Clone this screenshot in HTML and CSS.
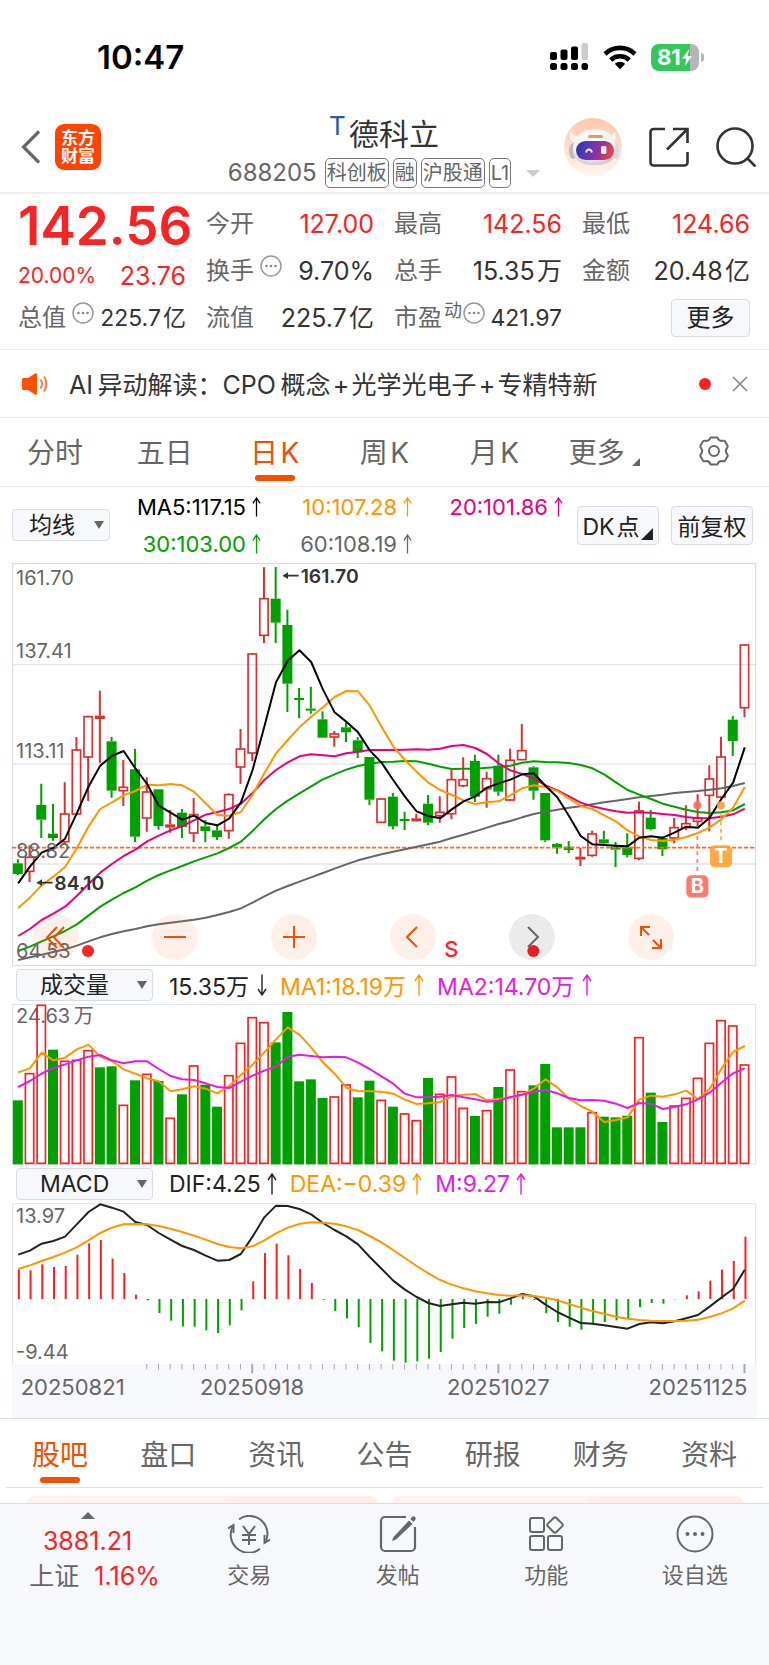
FILE: index.html
```html
<!DOCTYPE html>
<html lang="zh-CN">
<head>
<meta charset="utf-8">
<meta name="viewport" content="width=device-width, initial-scale=1">
<title>德科立 688205</title>
<link rel="stylesheet" href="styles.css">
</head>
<body>
<svg class="defs" aria-hidden="true">
  <symbol id="up" viewBox="0 0 10 22"><path d="M5 21.500V1M1 7 5 1l4 6" fill="none" stroke="currentColor" stroke-width="1.400"/></symbol>
  <symbol id="down" viewBox="0 0 10 22"><path d="M5 .5V21M1 15l4 6 4-6" fill="none" stroke="currentColor" stroke-width="1.400"/></symbol>
  <symbol id="info" viewBox="0 0 22 22"><circle cx="11" cy="11" r="10" fill="none" stroke="#999" stroke-width="1.500"/><g fill="#888"><circle cx="6.500" cy="11" r="1.300"/><circle cx="11" cy="11" r="1.300"/><circle cx="15.500" cy="11" r="1.300"/></g></symbol>
</svg>

<div class="status">
  <time>10:47</time>
  <svg class="signal" viewBox="0 0 38 28"><g><rect x="0" y="9" width="7" height="8" rx="2"/><rect x="10.500" y="6.500" width="7" height="10.500" rx="2"/><rect x="21" y="3.500" width="7" height="13.500" rx="2"/><rect x="31.500" y="0" width="6.500" height="17" rx="2" fill="#ccc"/><rect x="0" y="20" width="7" height="7" rx="2.500"/><rect x="10.500" y="20" width="7" height="7" rx="2.500"/><rect x="21" y="20" width="7" height="7" rx="2.500"/><rect x="31.500" y="20" width="6.500" height="7" rx="2.500"/></g></svg>
  <svg class="wifi" viewBox="0 0 34 25"><g fill="none" stroke="#000" stroke-width="4.600"><path d="M2 9a21.500 21.500 0 0 1 30 0"/><path d="M7.700 15a13.400 13.400 0 0 1 18.600 0"/></g><path d="M17 24.500l-5.200-5.700a7.600 7.600 0 0 1 10.400 0z"/></svg>
  <div class="battery"><span>81</span><svg viewBox="0 0 10 17"><path d="M7 0 0 9.500h4.200L3 17l7-10H5.800z" fill="#fff"/></svg></div>
</div>

<header class="header">
  <div class="header-left">
    <button class="plain" aria-label="返回"><svg width="20" height="34" viewBox="0 0 20 34"><path d="M18 1.500 2.500 17 18 32.500" fill="none" stroke="#666" stroke-width="3.200"/></svg></button>
    <a class="logo" href="#">东方<br>财富</a>
  </div>
  <div class="title">
    <h1><sup>T</sup>德科立</h1>
    <div class="codes"><span class="code">688205</span><span class="tag">科创板</span><span class="tag">融</span><span class="tag">沪股通</span><span class="tag">L1</span><i class="caret"></i></div>
  </div>
  <div class="header-right">
    <button class="plain" aria-label="智能助手"><svg width="58" height="58" viewBox="0 0 58 58">
      <defs><linearGradient id="halo" x1="0" y1="0" x2="0" y2="1"><stop offset="0" stop-color="#fdc7ab"/><stop offset="1" stop-color="#fff5ef"/></linearGradient><linearGradient id="visor" x1="0" y1="0" x2="1" y2=".2"><stop offset="0" stop-color="#2438a8"/><stop offset=".35" stop-color="#5a35b8"/><stop offset=".7" stop-color="#9a2fa0"/><stop offset="1" stop-color="#e0454f"/></linearGradient><radialGradient id="shell" cx=".45" cy=".3" r=".75"><stop offset="0" stop-color="#fff"/><stop offset=".7" stop-color="#f0eeee"/><stop offset="1" stop-color="#c4c0c4"/></radialGradient></defs>
      <circle cx="29" cy="29" r="29" fill="url(#halo)"/>
      <path d="M7 13c-3 5-1 10 4 12l7-8c-6 2-10 0-11-4zM50 13c3 5 2 10-3 12l-7-8c6 2 9 0 10-4z" fill="#faf4f2"/>
      <ellipse cx="9" cy="33" rx="4" ry="8" fill="#bfbbc0"/><ellipse cx="52" cy="33" rx="3" ry="8" fill="#dcd7da"/>
      <path d="M31 11c12 0 21 7 21 20 0 11-8 16-21 16S9 43 9 31c0-13 10-20 22-20z" fill="url(#shell)"/>
      <rect x="24" y="17" width="15" height="3" rx="1.500" fill="#e69a55"/>
      <rect x="12" y="23" width="38" height="19" rx="9.500" fill="url(#visor)"/>
      <path d="M22 34.500c1-4 5-4 6 0" fill="none" stroke="#eef" stroke-width="1.800"/><rect x="37" y="28" width="5.500" height="8" rx="2" fill="#fff"/>
    </svg></button>
    <button class="plain" aria-label="分享"><svg width="40" height="40" viewBox="0 0 40 40"><path d="M16 2H4.500A3 3 0 0 0 1.500 5v30.500a3 3 0 0 0 3 3h31a3 3 0 0 0 3-3V25M24 2h14.500v14M38 2.500 18 22.500" fill="none" stroke="#333" stroke-width="2.600"/></svg></button>
    <button class="plain" aria-label="搜索"><svg width="40" height="40" viewBox="0 0 40 40"><circle cx="19" cy="19" r="17.500" fill="none" stroke="#333" stroke-width="2.600"/><path d="m31.500 31.500 8 8" stroke="#333" stroke-width="2.600"/></svg></button>
  </div>
</header>

<section class="quote">
  <div class="price">142.56</div>
  <div class="cell"><span>今开</span><b class="red">127.00</b></div>
  <div class="cell"><span>最高</span><b class="red">142.56</b></div>
  <div class="cell"><span>最低</span><b class="red">124.66</b></div>
  <div class="cell change"><span class="red pct">20.00%</span><b class="red">23.76</b></div>
  <div class="cell"><span>换手<svg class="info"><use href="#info"/></svg></span><b>9.70%</b></div>
  <div class="cell"><span>总手</span><b>15.35&#8202;万</b></div>
  <div class="cell"><span>金额</span><b>20.48&#8202;亿</b></div>
  <div class="cell tight"><span>总值<svg class="info"><use href="#info"/></svg></span><b>225.7&#8202;亿</b></div>
  <div class="cell"><span>流值</span><b>225.7&#8202;亿</b></div>
  <div class="cell tight"><span class="pe">市盈<sup>动</sup><svg class="info"><use href="#info"/></svg></span><b>421.97</b></div>
  <div class="cell end"><button class="box more">更多</button></div>
</section>

<section class="notice">
  <svg width="27" height="22" viewBox="0 0 27 22"><path d="M0 6.500Q0 5 1.500 5H6l7-4.500q2-1 2 1v19q0 2-2 1L6 17H1.500Q0 17 0 15.500z" fill="#ff5000"/><path d="M18.500 6.500q3 4.500 0 9M22 3.500q5 7.500 0 15" fill="none" stroke="#ff7a3c" stroke-width="2"/></svg>
  <a href="#">AI&#8201;异动解读：CPO&#8201;概念&#8202;+&#8202;光学光电子&#8202;+&#8202;专精特新</a>
  <i class="dot"></i>
  <button class="plain" aria-label="关闭"><svg width="16" height="16" viewBox="0 0 16 16"><path d="m1 1 14 14M15 1 1 15" stroke="#888" stroke-width="1.700"/></svg></button>
</section>

<nav class="tabs">
  <button>分时</button><button>五日</button><button class="on">日&#8202;K</button><button>周&#8202;K</button><button>月&#8202;K</button><button class="with-corner">更多<i class="corner"></i></button>
  <button aria-label="设置"><svg width="32" height="32" viewBox="0 0 32 32"><path d="M12.600 2.500h6.800c.8 2.300 1.600 3.400 4.100 3.400 1.500 0 2.400-.6 3.300.2l2.900 5c.5 1.200-1.900 2.300-1.900 4.900s2.400 3.700 1.900 4.900l-2.900 5c-.9.8-1.800.2-3.300.2-2.500 0-3.300 1.100-4.100 3.400h-6.800c-.8-2.300-1.600-3.400-4.100-3.400-1.500 0-2.400.6-3.300-.2l-2.900-5c-.5-1.200 1.900-2.300 1.900-4.900s-2.400-3.700-1.900-4.900l2.900-5c.9-.8 1.800-.2 3.300-.2 2.500 0 3.300-1.100 4.100-3.400z" fill="none" stroke="#666" stroke-width="2" stroke-linejoin="round"/><circle cx="16" cy="16" r="5" fill="none" stroke="#666" stroke-width="2"/></svg></button>
</nav>

<section class="averages">
  <span class="pick line"><select class="box" aria-label="主图指标"><option>均线</option></select></span>
  <div class="ma">
    <span class="c-black">MA5:117.15<svg><use href="#up"/></svg></span>
    <span class="c-orange">10:107.28<svg><use href="#up"/></svg></span>
    <span class="c-pink">20:101.86<svg><use href="#up"/></svg></span>
    <span class="c-green">30:103.00<svg><use href="#up"/></svg></span>
    <span class="c-gray">60:108.19<svg><use href="#up"/></svg></span>
  </div>
  <button class="box mode dk">DK&#8202;点<i class="corner"></i></button>
  <button class="box mode">前复权</button>
</section>

<main class="charts">
  <div class="price-chart">
    <svg id="kline" viewBox="36 9 2235 1209" role="img" aria-label="日K线"></svg>
    <div class="controls">
      <button aria-label="最早"><svg viewBox="0 0 46 46"><path d="M24 13 14 23.500 24 34M31 13 21 23.500 31 34"/></svg></button>
      <button aria-label="缩小"><svg viewBox="0 0 46 46"><path d="M12 23h22"/></svg></button>
      <button aria-label="放大"><svg viewBox="0 0 46 46"><path d="M12 23h22M23 12v22"/></svg></button>
      <button aria-label="向左"><svg viewBox="0 0 46 46"><path d="M27 13 17 23l10 10"/></svg></button>
      <button class="off" aria-label="向右"><svg viewBox="0 0 46 46"><path d="m19 13 10 10-10 10"/></svg></button>
      <button aria-label="全屏"><svg viewBox="0 0 46 46"><path d="M22 13h-9v9M13 13l8 8M24 34h9v-9M33 34l-8-8"/></svg></button>
    </div>
  </div>
  <div class="sub">
    <span class="pick"><select class="box" aria-label="副图一"><option>成交量</option></select></span>
    <span class="c-dark">15.35万<svg><use href="#down"/></svg></span><span class="c-orange">MA1:18.19万<svg><use href="#up"/></svg></span><span class="c-violet">MA2:14.70万<svg><use href="#up"/></svg></span>
  </div>
  <svg id="volume" viewBox="36 132 2235 483" role="img" aria-label="成交量"></svg>
  <div class="sub macd">
    <span class="pick"><select class="box" aria-label="副图二"><option>MACD</option></select></span>
    <span class="c-dark">DIF:4.25<svg><use href="#up"/></svg></span><span class="c-orange">DEA:−0.39<svg><use href="#up"/></svg></span><span class="c-violet">M:9.27<svg><use href="#up"/></svg></span>
  </div>
  <svg id="macd" viewBox="36 129 2235 483" role="img" aria-label="MACD"></svg>
  <svg id="axis" viewBox="36 612 2235 162" role="img" aria-label="日期"></svg>
</main>

<nav class="tabs lower">
  <button class="on">股吧</button><button>盘口</button><button>资讯</button><button>公告</button><button>研报</button><button>财务</button><button>资料</button>
</nav>
<div class="cards"><i></i><i></i></div>

<footer class="footer">
  <button class="index"><i class="tri"></i><span class="red">3881.21</span><span>上证 <b class="red">1.16%</b></span></button>
  <button><svg viewBox="0 0 42 38"><g fill="none" stroke="#666" stroke-width="2"><path d="M11 4.200A18 18 0 0 1 37.500 27M32 33.800A18 18 0 0 1 5 11"/><path d="M0 13.500 5.500 10v8M42 24.500 36.500 28v-8M15 11l6 8 6-8M14 20h14M14 25h14M21 19v11"/></g></svg>交易</button>
  <button><svg viewBox="0 0 42 38"><path d="M29 2H8a4 4 0 0 0-4 4v26a4 4 0 0 0 4 4h26a4 4 0 0 0 4-4V12" fill="none" stroke="#666" stroke-width="2.200"/><path d="M32 5.500 35.500 9 19 24.500 15 26l1.500-4zM33.500 4l1.500-2q1.500-1.500 3 0t0 3L36.500 7z" fill="#666"/></svg>发帖</button>
  <button><svg viewBox="0 0 42 38"><g fill="none" stroke="#666" stroke-width="2"><rect x="5" y="3" width="14" height="14" rx="2"/><rect x="5" y="21" width="14" height="14" rx="2"/><rect x="23" y="21" width="14" height="14" rx="2"/><rect x="24" y="4" width="12" height="12" rx="2" transform="rotate(45 30 10)"/></g></svg>功能</button>
  <button><svg viewBox="0 0 42 38"><circle cx="21" cy="19" r="17.500" fill="none" stroke="#666" stroke-width="2"/><g fill="#666"><circle cx="13.500" cy="19" r="2"/><circle cx="21" cy="19" r="2"/><circle cx="28.500" cy="19" r="2"/></g></svg>设自选</button>
</footer>
<script src="charts.js"></script>
</body>
</html>
```

FILE: styles.css
```css
* { box-sizing: border-box; }
body { margin: 0; background: #fff; color: #333; font-family: Inter, "Noto Sans CJK SC", sans-serif; font-size: 24px; }
button, select { font: inherit; color: inherit; margin: 0; padding: 0; border: 0; background: none; }
svg { display: block; flex: none; }
b { font-weight: 400; }
.defs { position: absolute; width: 0; height: 0; }
.plain { display: block; }
.red { color: #f82424; }
.c-black { color: #000; }
.c-dark { color: #222; }
.c-orange { color: #ff9500; }
.c-pink { color: #e4007f; }
.c-green { color: #00a000; }
.c-gray { color: #666; }
.c-violet { color: #e31be3; }

.status { display: flex; align-items: center; padding: 39px 70px 0 97px; line-height: 36px; color: #000; }
.status time { flex: 1; font-size: 33px; font-weight: 600; }
.signal { width: 38px; height: 28px; }
.wifi { width: 34px; height: 25px; margin: 0 14px 0 15px; }
.battery { position: relative; display: flex; align-items: center; gap: 1px; width: 48px; height: 27px; padding-left: 6px; border-radius: 8px; background: linear-gradient(90deg, #34c759 82%, #b5b5b5 82%); color: #fff; font-size: 22px; font-weight: 700; }
.battery svg { width: 10px; height: 17px; }
.battery::after { content: ""; position: absolute; right: -5px; top: 9px; width: 3px; height: 9px; border-radius: 0 4px 4px 0; background: #b5b5b5; }

.header { display: grid; grid-template-columns: 1fr auto 1fr; align-items: center; padding: 31px 13px 4px 12px; border-bottom: 2px solid #eee; }
.header-left, .header-right { display: flex; align-items: center; }
.header-left { gap: 14px; padding-left: 9px; }
.header-right { justify-content: flex-end; gap: 27px; }
.logo { width: 46px; height: 46px; padding-top: 5px; border-radius: 9px; background: #ff4400; color: #fff; font-size: 17px; font-weight: 700; line-height: 18px; text-align: center; text-decoration: none; }
.title { padding-top: 10px; }
h1 { display: flex; justify-content: center; gap: 3px; margin: 0 0 6px; font-size: 30px; font-weight: 400; line-height: 36px; }
h1 sup { font-size: 26px; line-height: 20px; color: #2c5aa0; }
.codes { display: flex; align-items: center; gap: 4px; line-height: 30px; }
.code { margin-right: 4px; font-size: 24px; color: #666; }
.tag { height: 30px; padding: 0 1px; border: 1px solid #777; border-radius: 5px; font-size: 20px; line-height: 28px; color: #666; }
.caret { margin-left: 11px; border: 7px solid transparent; border-top-color: #ccc; border-bottom: 0; }

.quote { display: grid; grid-template-columns: repeat(4, minmax(0, 1fr)); grid-auto-rows: 47px; column-gap: 20px; padding: 6px 19px 8px 18px; border-bottom: 1px solid #eee; }
.price { display: flex; align-items: center; padding-top: 5px; font-size: 53px; font-weight: 600; color: #f82424; }
.cell { display: flex; align-items: center; justify-content: space-between; white-space: nowrap; line-height: 36px; }
.cell > span { display: flex; color: #666; }
.cell b { font-size: 25px; }
.cell.tight b { font-size: 23px; }
.cell.change { padding-top: 10px; }
.cell .pct { font-size: 21px; color: #f82424; }
.info { width: 22px; height: 22px; margin: 2px 0 0 6px; }
.pe sup { margin-left: 2px; font-size: 18px; line-height: 22px; }
.pe .info { margin-left: 1px; }
.cell.end { justify-content: flex-end; }
.box { border: 1px solid #d9dce3; border-radius: 4px; background: #f7f8fb; color: #222; }
.more { width: 79px; height: 38px; }

.notice { display: flex; align-items: center; height: 68px; padding: 0 21px 0 22px; border-bottom: 1px solid #eee; }
.notice a { flex: 1; margin-left: 20px; padding-bottom: 2px; font-size: 25px; color: #333; text-decoration: none; white-space: nowrap; }
.dot { width: 12px; height: 12px; margin-right: 21px; border-radius: 50%; background: #f82424; }

.tabs { display: flex; height: 69px; border-bottom: 1px solid #eee; font-size: 28px; color: #666; }
.tabs button { position: relative; flex: 1; display: flex; align-items: center; justify-content: center; padding-bottom: 2px; white-space: nowrap; }
.tabs .on { color: #f05000; }
.tabs .on::after { content: ""; position: absolute; left: 50%; bottom: 5px; width: 40px; height: 6px; margin-left: -20px; border-radius: 3px; background: #f05000; }
.corner { align-self: flex-end; border-left: 8px solid transparent; border-bottom: 8px solid #666; }
.with-corner .corner { margin: 0 0 18px 7px; }

.averages { display: flex; align-items: center; height: 76px; padding: 0 16px 0 12px; }
.pick { position: relative; display: block; width: 137px; height: 32px; }
.pick.line { width: 98px; }
.pick select { appearance: none; width: 100%; height: 100%; padding-left: 23px; font-size: 23px; line-height: 28px; }
.pick.line select { padding-left: 16px; }
.pick::after { content: ""; position: absolute; right: 6px; top: 12px; border: 5px solid transparent; border-top: 8px solid #666; border-bottom: 0; }
.ma { flex: 1; display: grid; grid-template-columns: repeat(3, 1fr); grid-auto-rows: 37px; font-size: 22px; }
.ma span { display: flex; align-items: center; justify-content: flex-end; gap: 6px; white-space: nowrap; }
.ma svg { width: 9px; height: 20px; }
.mode { position: relative; width: 82px; height: 39px; margin-left: 12px; font-size: 23px; white-space: nowrap; }
.mode.dk { padding-right: 14px; margin-left: 14px; }
.mode .corner { position: absolute; right: 5px; bottom: 4px; border-left-width: 12px; border-bottom: 12px solid #222; }

.charts { padding: 0 12px; }
.charts > svg, .price-chart > svg { width: 100%; height: auto; }
.charts svg text { font-family: Inter, "Noto Sans CJK SC", sans-serif; fill: #666; }
.price-chart { position: relative; }
.controls { position: absolute; left: 21px; right: 83px; bottom: 6px; display: flex; justify-content: space-between; }
.controls button { width: 46px; height: 46px; border-radius: 50%; background: rgba(250, 100, 30, .1); }
.controls svg { fill: none; stroke: #f05000; stroke-width: 2; }
.controls .off { background: rgba(0, 0, 0, .08); }
.controls .off svg { stroke: #666; }
.sub { display: flex; align-items: center; gap: 13px; height: 38px; padding-left: 4px; font-size: 23px; white-space: nowrap; }
.sub .pick { margin-right: 3px; }
.sub > span:not(.pick) { display: flex; align-items: center; gap: 8px; }
.sub.macd > span:not(.pick) { gap: 6px; }
.sub span > svg { width: 10px; height: 22px; }

.lower { border-top: 1px solid #dfe1e6; border-bottom: 0; padding: 0 6px; }
.lower button { padding-bottom: 1px; }
.lower .on::after { bottom: 4px; }
.cards { display: flex; gap: 14px; margin: 0 6px; padding: 8px 20px 0; border-top: 1px solid #dfe1e6; }
.cards i { flex: 1; height: 7px; border-radius: 12px 12px 0 0; background: linear-gradient(90deg, #fff4f0 55%, #feeeea 60%); }

.footer { display: flex; align-items: flex-start; height: 162px; border-top: 1px solid #d9dce3; background: #f7f8fb; color: #666; font-size: 22px; }
.footer button { flex: 1; display: flex; flex-direction: column; align-items: center; gap: 6px; padding-top: 11px; line-height: 32px; }
.footer svg { width: 42px; height: 38px; }
.footer .index { flex: none; width: 175px; gap: 0; padding-top: 8px; font-size: 25px; line-height: 35px; }
.footer .index > .red { padding-top: 5px; }
.footer .index > span:last-child { padding-left: 14px; }
.footer .index b { margin-left: 8px; }
.tri { border: 7px solid transparent; border-bottom-color: #666; border-top: 0; }
```

FILE: charts.js
```js
const X0 = 53.5, STEP = 35.16;
const cx = i => X0 + STEP * i;
const RED = '#d93030', HOT = '#f82020', GREEN = '#00a000';
const line = (ys, color, w = 6, dx = 1) =>
  `<polyline fill="none" stroke="${color}" stroke-width="${w}" stroke-linejoin="round" points="${ys.map((y, i) => (cx(i) + dx).toFixed(1) + ',' + y).join(' ')}"/>`;
const rule = (y, c = '#e3e6ec') => `<path d="M36 ${y}H2268" stroke="${c}" stroke-width="4"/>`;
const label = (x, y, s) => `<text x="${x}" y="${y}" font-size="60">${s}</text>`;

/* high, body top, body bottom, low, rising */
const K = [
[898,910,942,945,0],[856,891,935,966,1],[671,735,779,834,0],[732,821,834,842,0],[667,761,846,850,1],[531,569,763,767,1],[467,469,592,723,1],
[392,467,477,609,1],[531,544,692,713,0],[600,681,693,738,1],[567,628,830,846,0],[652,695,775,815,1],[688,688,798,809,0],[750,793,803,818,1],
[747,758,801,834,0],[714,763,820,846,1],[779,799,813,846,0],[796,811,831,840,0],[700,703,813,836,1],[507,566,622,672,1],[279,281,580,603,1],
[22,115,227,249,1],[21,116,188,249,0],[149,195,371,456,0],[384,414,420,474,0],[380,446,452,461,0],[454,478,533,533,0],[513,521,532,560,1],
[488,502,517,546,0],[531,541,577,594,0],[591,591,719,735,0],[714,716,788,788,1],[699,710,799,808,0],[755,777,783,810,0],[761,775,784,785,1],
[705,731,788,795,0],[709,756,768,788,1],[628,658,762,778,1],[592,658,678,681,1],[584,603,710,726,0],[635,655,687,743,1],[584,617,695,707,0],
[566,600,721,722,1],[492,571,600,601,1],[619,622,692,719,0],[699,699,841,846,0],[849,852,863,881,0],[843,860,870,879,0],[864,890,899,918,1],
[812,821,887,890,1],[812,838,850,853,0],[846,860,869,921,0],[820,862,885,892,0],[725,752,896,901,1],[750,773,807,811,0],[830,834,868,888,0],
[774,802,835,850,1],[736,790,804,811,1],[703,773,785,800,1],[616,656,707,814,1],[530,590,712,716,1],[468,479,543,588,0],[252,254,444,471,1]];

const MA5 = [970,920,878,864,836,760,680,617,588,573,625,672,737,758,779,767,789,796,776,728,630,500,367,302,271,306,388,457,485,517,571,608,660,710,754,768,775,748,724,709,683,670,659,643,640,678,712,768,828,853,855,857,859,833,829,833,818,800,803,773,717,668,562];
const MA10 = [1044,1013,976,950,921,865,800,747,727,706,693,674,676,672,676,695,730,765,767,756,705,640,580,540,502,470,442,411,393,394,437,500,559,600,635,668,690,705,721,732,727,724,706,685,676,681,693,715,738,747,766,784,811,829,840,843,839,831,819,802,778,743,681];
const MA20 = [1128,1107,1080,1061,1040,1008,972,938,912,888,869,844,827,811,798,781,764,756,747,731,699,660,630,607,589,583,586,589,580,575,570,570,570,569,568,569,566,558,555,564,582,610,631,642,656,676,691,709,728,739,747,754,758,757,758,762,765,771,775,775,770,763,746];
const MA30 = [1173,1160,1144,1129,1113,1093,1067,1040,1019,999,982,962,945,931,918,904,892,880,864,845,813,778,747,722,700,679,658,643,629,618,611,606,605,603,604,611,620,627,626,626,623,621,617,608,604,606,607,609,615,625,643,667,690,704,717,731,740,749,756,759,757,751,732];
const MA60 = [1200,1192,1184,1176,1168,1157,1144,1132,1122,1114,1107,1099,1093,1088,1084,1079,1073,1065,1056,1045,1028,1009,992,978,965,952,939,926,913,901,892,883,875,868,860,853,845,834,824,814,803,792,783,772,762,755,749,743,739,733,727,722,717,712,708,704,699,696,693,689,685,678,669];

const candle = ([h, t, b, l, up], i) => {
  const x = cx(i), c = up ? RED : GREEN;
  const solid = !up || b - t <= 10;
  return `<path d="M${x} ${h}V${t}M${x} ${b}V${l}" stroke="${c}" stroke-width="6"/>` + (solid
    ? `<rect x="${x - 15}" y="${t}" width="30" height="${b - t}" fill="${c}"/>`
    : `<rect x="${x - 12.5}" y="${t + 1}" width="25" height="${b - t - 2}" fill="none" stroke="${c}" stroke-width="5"/>`);
};
const marker = (x, y, top, color, letter) =>
  `<g opacity=".9"><circle cx="${x}" cy="736" r="12" fill="${color}"/><path d="M${x} ${top}V${y - 10}" stroke="${color}" stroke-width="5" stroke-dasharray="12 11"/><rect x="${x - 33}" y="${y}" width="66" height="66" rx="14" fill="${color}"/></g><text x="${x}" y="${y + 54}" font-size="60" font-weight="700" text-anchor="middle" style="fill:#fff">${letter}</text>`;

document.getElementById('kline').innerHTML =
  rule(314) + rule(612) + rule(912) +
  '<rect x="38" y="11" width="2229" height="1205" fill="none" stroke="#d5d8de" stroke-width="3"/>' +
  K.map(candle).join('') +
  '<path d="M36 863H2268" stroke="#f07030" stroke-width="5" stroke-dasharray="13 5"/>' +
  line(MA60, '#666') + line(MA30, GREEN) + line(MA20, '#e4007f') + line(MA10, '#ff9500') + line(MA5, '#000') +
  label(48, 75, '161.70') + label(48, 294, '137.41') + label(48, 594, '113.11') + label(48, 894, '88.82') + label(48, 1194, '64.53') +
  '<g stroke="#333" stroke-width="5"><path d="M896 47H850M158 968H112"/><path d="m864 37-16 10 16 10zM126 958l-16 10 16 10z" fill="#333" stroke="none"/></g>' +
  '<g font-size="58" font-weight="600"><text x="902" y="68" style="fill:#333">161.70</text><text x="163" y="990" style="fill:#333">84.10</text></g>' +
  marker(2092, 946, 828, '#ff6a5a', 'B') + marker(2163, 856, 760, '#ffa030', 'T') +
  '<circle cx="264" cy="1173" r="18" fill="#f82424"/><circle cx="1600" cy="1173" r="18" fill="#f82424"/>' +
  '<text x="1333" y="1190" font-size="66" font-weight="500" style="fill:#f82424">S</text>';

/* bar top, rising */
const V = [[421,0],[340,1],[135,1],[269,0],[303,1],[300,1],[271,1],[322,0],[319,0],[435,1],[361,0],[342,1],[363,0],[474,1],[403,0],[317,1],[374,0],[440,0],[346,1],[249,1],[172,1],[187,1],[247,0],[156,0],[364,0],[358,0],[414,0],[410,1],[374,1],[412,0],[362,0],[420,1],[440,0],[461,1],[481,1],[354,0],[402,1],[350,1],[444,1],[468,0],[451,1],[381,0],[329,1],[394,1],[376,0],[312,0],[502,0],[502,0],[502,0],[457,1],[470,0],[472,0],[467,0],[232,1],[398,0],[486,0],[437,1],[414,1],[354,1],[249,1],[181,1],[197,1],[314,1]];
const VA = [337,325,278,301,293,268,254,290,303,328,341,355,364,394,388,379,386,400,378,345,314,277,238,202,224,262,307,341,383,393,394,395,401,419,432,430,426,409,404,402,421,417,413,404,386,358,382,416,438,455,486,480,472,419,407,410,403,392,417,387,326,276,258];
const VB = [381,363,341,324,313,301,290,285,301,310,304,304,327,348,358,360,370,381,384,365,347,332,320,290,284,288,292,290,292,308,327,349,371,401,412,412,410,405,412,418,425,422,411,404,395,390,400,414,421,420,422,431,444,429,431,447,441,433,418,398,368,340,325];
document.getElementById('volume').innerHTML =
  '<rect x="38" y="133" width="2229" height="480" fill="none" stroke="#dfe1e6" stroke-width="3"/>' +
  label(48, 190, '24.63&#8201;万') +
  V.map(([t, up], i) => up
    ? `<rect x="${cx(i) - 12.5}" y="${t + 1}" width="25" height="${609 - t}" fill="none" stroke="${HOT}" stroke-width="5"/>`
    : `<rect x="${cx(i) - 15}" y="${t}" width="30" height="${613 - t}" fill="${GREEN}"/>`).join('') +
  line(VA, '#ff9500') + line(VB, '#e31be3');

const M = [329,331,313,321,318,284,250,240,296,339,404,421,459,482,499,500,511,519,496,451,364,279,251,286,327,369,419,453,475,501,549,574,602,608,604,596,576,536,504,492,470,461,434,409,420,459,486,500,509,493,486,481,474,441,429,431,418,406,394,362,329,303,230];
const DIF = [284,272,251,243,230,193,156,133,143,155,186,195,219,239,258,270,287,302,300,282,230,172,137,138,147,163,189,210,229,253,291,326,362,389,411,429,438,433,428,431,426,427,415,402,409,434,456,473,489,491,496,501,506,492,487,490,484,475,465,440,413,387,329];
const DEA = [327,316,303,291,278,262,241,219,203,193,192,193,198,206,216,227,239,252,261,265,259,241,220,203,192,187,188,191,199,210,228,247,270,294,318,340,360,374,385,394,400,405,407,406,408,413,421,432,443,453,461,470,476,480,482,483,483,482,479,471,460,445,422];
document.getElementById('macd').innerHTML =
  '<path d="M38 612V131H2267V612" fill="none" stroke="#dfe1e6" stroke-width="3"/>' +
  M.map((y, i) => `<path d="M${cx(i) + 3} 417V${y}" stroke="${y < 417 ? HOT : GREEN}" stroke-width="6"/>`).join('') +
  line(DIF, '#222') + line(DEA, '#ff9500') +
  label(48, 188, '13.97') + label(48, 598, '-9.44');

let ticks = '';
for (let i = 11; i < 63; i++) {
  const major = i % 21 === 20;
  ticks += `<path d="M${cx(i)} 612V${major ? 640 : 629}" stroke="#aaa" stroke-width="${major ? 6 : 3}"/>`;
}
const date = (x, s, a) => `<text x="${x}" y="704" font-size="66" text-anchor="${a}">${s}</text>`;
document.getElementById('axis').innerHTML =
  '<rect x="36" y="612" width="2235" height="162" fill="#f7f8fb"/>' + ticks +
  date(62, '20250821', 'start') + date(756, '20250918', 'middle') + date(1495, '20251027', 'middle') + date(2242, '20251125', 'end');
```
